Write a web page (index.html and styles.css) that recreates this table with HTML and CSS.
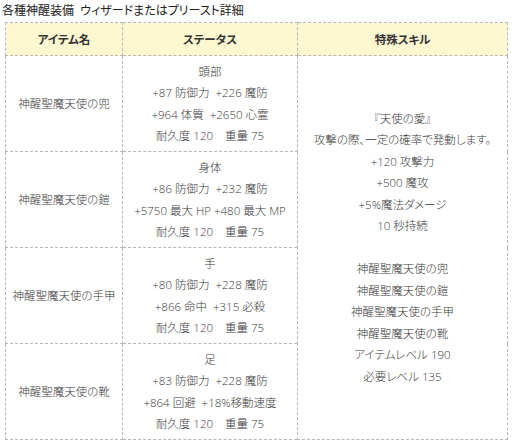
FILE: index.html
```html
<!DOCTYPE html>
<html lang="ja">
<head>
<meta charset="utf-8">
<link rel="stylesheet" href="styles.css">
</head>
<body>
<div class="title">各種神醒装備&nbsp;&nbsp;ウィザードまたはプリースト詳細</div>
<table class="equip">
  <colgroup>
    <col class="c1"><col class="c2"><col class="c3">
  </colgroup>
  <thead>
    <tr><th>アイテム名</th><th>ステータス</th><th>特殊スキル</th></tr>
  </thead>
  <tbody>
    <tr>
      <td class="name">神醒聖魔天使の兜</td>
      <td class="stat"><div>頭部</div><div>+87 防御力&nbsp;&nbsp;+226 魔防</div><div>+964 体質&nbsp;&nbsp;+2650 心霊</div><div>耐久度 120&nbsp;&nbsp;&nbsp;&nbsp;重量 75</div></td>
      <td class="skill" rowspan="4">
        <div>『天使の愛』</div>
        <div>攻撃の際、一定の確率で発動します。</div>
        <div>+120 攻撃力</div>
        <div>+500 魔攻</div>
        <div>+5%魔法ダメージ</div>
        <div>10 秒持続</div>
        <div class="blank"></div>
        <div>神醒聖魔天使の兜</div>
        <div>神醒聖魔天使の鎧</div>
        <div>神醒聖魔天使の手甲</div>
        <div>神醒聖魔天使の靴</div>
        <div>アイテムレベル 190</div>
        <div>必要レベル 135</div>
      </td>
    </tr>
    <tr>
      <td class="name">神醒聖魔天使の鎧</td>
      <td class="stat"><div>身体</div><div>+86 防御力&nbsp;&nbsp;+232 魔防</div><div>+5750 最大 HP +480 最大 MP</div><div>耐久度 120&nbsp;&nbsp;&nbsp;&nbsp;重量 75</div></td>
    </tr>
    <tr>
      <td class="name">神醒聖魔天使の手甲</td>
      <td class="stat"><div>手</div><div>+80 防御力&nbsp;&nbsp;+228 魔防</div><div>+866 命中&nbsp;&nbsp;+315 必殺</div><div>耐久度 120&nbsp;&nbsp;&nbsp;&nbsp;重量 75</div></td>
    </tr>
    <tr>
      <td class="name">神醒聖魔天使の靴</td>
      <td class="stat"><div>足</div><div>+83 防御力&nbsp;&nbsp;+228 魔防</div><div>+864 回避&nbsp;&nbsp;+18%移動速度</div><div>耐久度 120&nbsp;&nbsp;&nbsp;&nbsp;重量 75</div></td>
    </tr>
  </tbody>
</table>
</body>
</html>
```
FILE: styles.css
```css
html, body {
  margin: 0;
  padding: 0;
  background: #fff;
}
body {
  padding: 1px 5px 0 5px;
  font-family: "Open Sans", "Noto Sans CJK JP", sans-serif;
  font-feature-settings: "palt";
  color: #333;
}
.title {
  font-size: 12px;
  line-height: 19px;
  height: 21px;
  color: #222;
  margin-left: -3px;
  font-weight: 400;
}
.equip {
  width: 502px;
  border-collapse: collapse;
  border: 1px dashed #b8b8b8;
  font-size: 11.5px;
  table-layout: fixed;
}
.c1 { width: 117px; }
.c2 { width: 175px; }
.c3 { width: 210px; }
.equip th {
  background: #fdf7d2;
  height: 32px;
  padding: 0;
  font-weight: bold;
  color: #333;
  border: 1px dashed #b8b8b8;
  text-align: center;
  vertical-align: middle;
}
.equip td {
  border: 1px dashed #b8b8b8;
  text-align: center;
  vertical-align: middle;
  padding: 0;
  line-height: 21.5px;
  font-weight: 300;
  color: #3a3a3a;
}
.equip .stat {
  height: 96px;
  padding: 3px 0;
  box-sizing: border-box;
  white-space: nowrap;
}
.blank {
  height: 21.5px;
}
```
